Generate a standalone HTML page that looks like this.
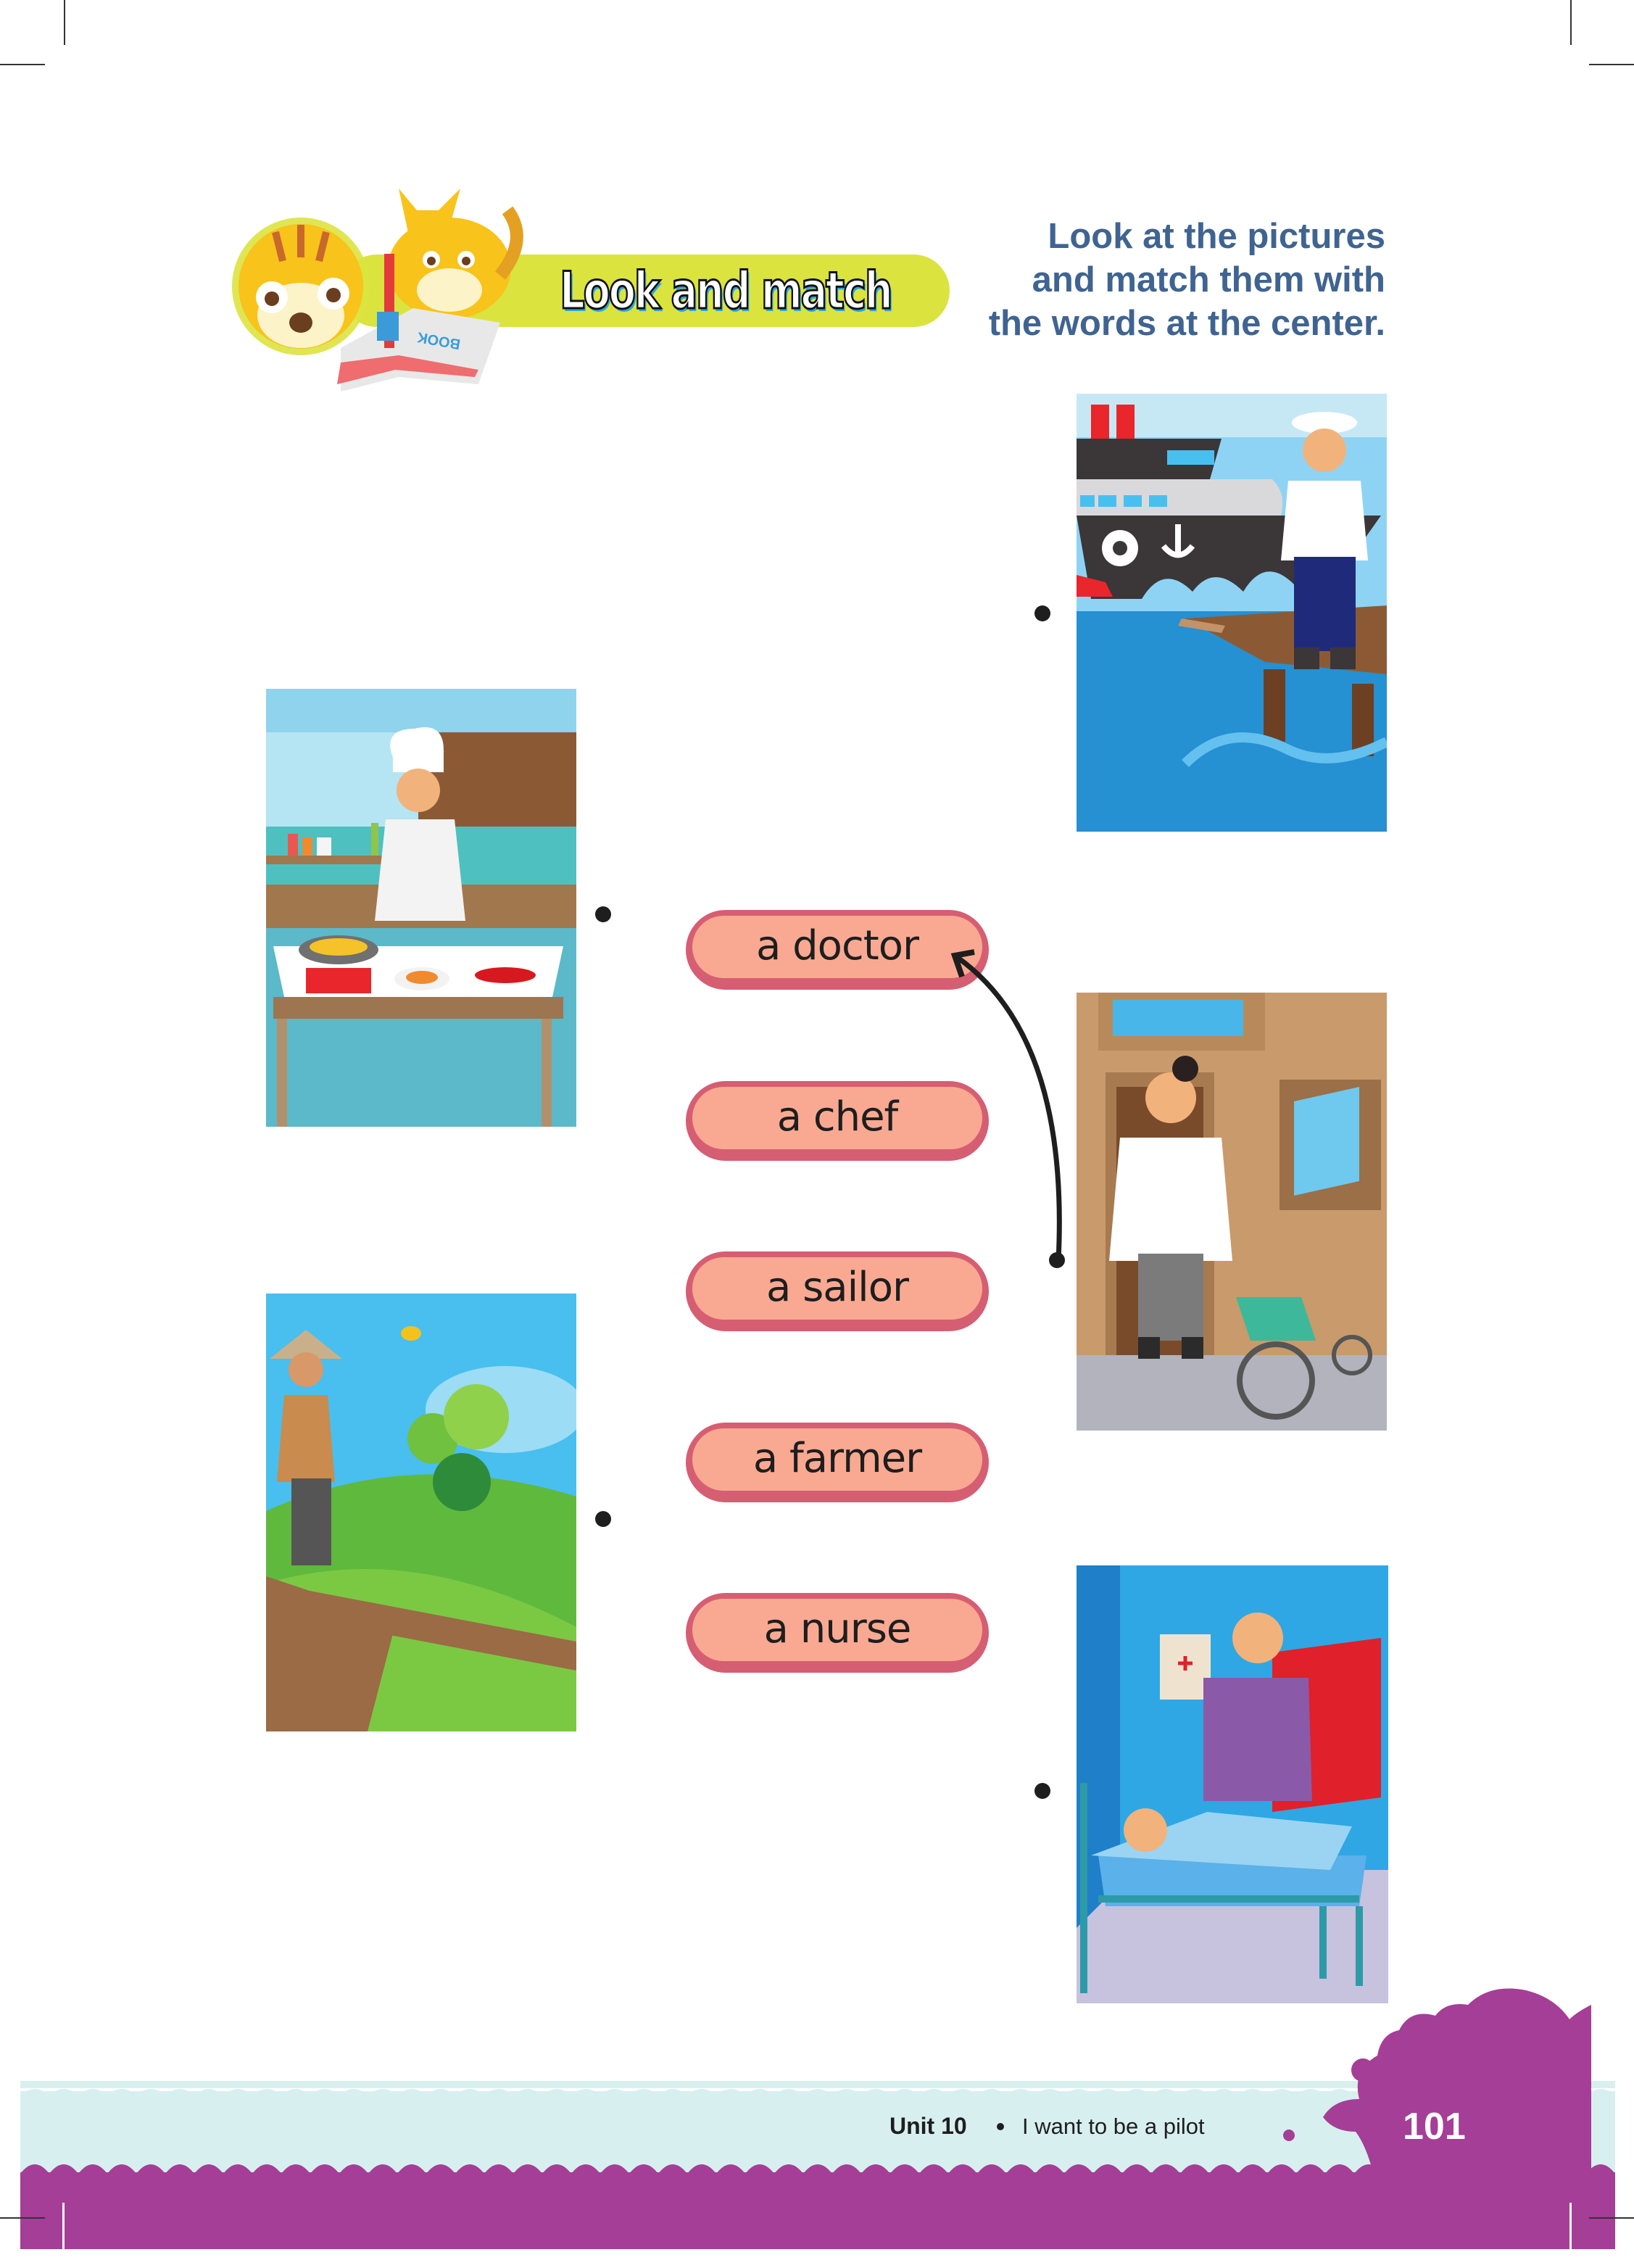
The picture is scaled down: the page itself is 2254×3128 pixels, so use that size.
<!DOCTYPE html>
<html><head><meta charset="utf-8">
<style>
html,body{margin:0;padding:0;background:#fff;}
body{width:2254px;height:3128px;position:relative;overflow:hidden;font-family:"Liberation Sans",sans-serif;}
.abs{position:absolute;}
svg{overflow:visible;}
.img{overflow:hidden !important;}
.pill{position:absolute;left:946px;width:418px;height:110px;box-sizing:border-box;border-radius:55px;background:#d65e72;}
.pill div{position:absolute;left:9px;right:9px;top:8px;bottom:16px;border-radius:48px;background:#f9a992;text-align:center;line-height:84px;font-size:56px;color:#1e1e1e;font-family:"DejaVu Sans","Liberation Sans",sans-serif;letter-spacing:-1px;}
.dot{position:absolute;width:22px;height:22px;border-radius:50%;background:#1e1e1e;margin:-11px 0 0 -11px;}
.instr{position:absolute;right:343px;top:296px;text-align:right;color:#3f6491;font-size:49px;line-height:60px;font-weight:bold;}
.img{position:absolute;width:428px;height:604px;}
</style></head><body>

<!-- crop marks -->
<div class="abs" style="left:88px;top:0;width:2px;height:62px;background:#333"></div>
<div class="abs" style="left:0;top:88px;width:62px;height:2px;background:#333"></div>
<div class="abs" style="left:2166px;top:0;width:2px;height:62px;background:#333"></div>
<div class="abs" style="left:2192px;top:88px;width:62px;height:2px;background:#333"></div>

<!-- header -->
<div class="abs" style="left:470px;top:351px;width:840px;height:100px;border-radius:50px;background:#dbe33f"></div>
<svg class="abs" style="left:320px;top:240px" width="480" height="310" viewBox="0 0 480 310">
 <ellipse cx="95" cy="155" rx="95" ry="95" fill="#dbe33f" opacity=".9"/>
 <circle cx="95" cy="155" r="86" fill="#f8c31a"/>
 <ellipse cx="95" cy="195" rx="60" ry="45" fill="#fdf3c9"/>
 <circle cx="55" cy="170" r="22" fill="#fff"/><circle cx="55" cy="172" r="10" fill="#6b3e1f"/>
 <circle cx="140" cy="165" r="22" fill="#fff"/><circle cx="140" cy="167" r="10" fill="#6b3e1f"/>
 <ellipse cx="95" cy="205" rx="16" ry="14" fill="#6b3e1f"/>
 <path d="M60 80 l10 40 M95 70 l0 45 M130 80 l-10 40" stroke="#c8692a" stroke-width="10"/>
 <path d="M230 20 l15 70 l50 0 l20 -70 l-30 30 l-30 0z" fill="#f8c31a"/>
 <ellipse cx="300" cy="130" rx="85" ry="70" fill="#f8c31a"/>
 <ellipse cx="300" cy="160" rx="45" ry="30" fill="#fdf3c9"/>
 <circle cx="275" cy="118" r="12" fill="#fff"/><circle cx="323" cy="118" r="12" fill="#fff"/>
 <circle cx="275" cy="120" r="6" fill="#6b3e1f"/><circle cx="323" cy="120" r="6" fill="#6b3e1f"/>
 <path d="M380 50 q30 40 -10 90" stroke="#e3a022" stroke-width="18" fill="none"/>
 <path d="M150 240 l100 -55 l120 20 l-30 85 l-110 -10 l-80 20z" fill="#e8e8e8"/>
 <path d="M150 260 l80 -10 l110 20 l-5 10 l-110 -10 l-80 20z" fill="#ef6c6f"/>
 <rect x="210" y="110" width="14" height="130" fill="#e33b3b"/>
 <rect x="200" y="190" width="30" height="40" fill="#3a9bd8"/>
 <text x="285" y="238" font-family="Liberation Sans" font-size="20" font-weight="bold" fill="#3a9bd8" transform="rotate(190 300 232)">BOOK</text>
</svg>
<div class="abs" style="left:772px;top:360px;font-size:70px;font-weight:bold;color:#fff;letter-spacing:-3px;-webkit-text-stroke:3px #111;text-shadow:3px 4px 0 #2aa7e0;font-family:'DejaVu Sans','Liberation Sans',sans-serif;transform:scaleX(0.78);transform-origin:0 0;white-space:nowrap;">Look and match</div>

<div class="instr">Look at the pictures<br>and match them with<br>the words at the center.</div>

<!-- sailor -->
<svg class="img" style="left:1485px;top:543px" viewBox="0 0 428 604">
 <rect width="428" height="604" fill="#2590d2"/>
 <rect width="428" height="300" fill="#8fd3f4"/>
 <rect x="0" y="0" width="428" height="60" fill="#c6e8f5"/>
 <rect x="20" y="15" width="25" height="50" fill="#e8262b"/><rect x="55" y="15" width="25" height="50" fill="#e8262b"/>
 <path d="M0 62 h200 l-20 70 H0z" fill="#3b3638"/>
 <rect x="125" y="78" width="65" height="20" fill="#48c0ef"/>
 <path d="M0 118 h270 q20 20 12 50 H0z" fill="#d9d9dc"/>
 <rect x="5" y="140" width="20" height="16" fill="#48c0ef"/><rect x="30" y="140" width="25" height="16" fill="#48c0ef"/><rect x="65" y="140" width="25" height="16" fill="#48c0ef"/><rect x="100" y="140" width="25" height="16" fill="#48c0ef"/>
 <path d="M0 168 h420 l-60 85 q-30 -20 -60 10 q-40 -40 -70 10 q-40 -40 -70 0 q-40 -40 -70 10 l-70 0z" fill="#3b3638"/>
 <path d="M0 250 l40 10 l10 20 l-50 0z" fill="#e8262b"/>
 <circle cx="60" cy="213" r="25" fill="#fff"/><circle cx="60" cy="213" r="10" fill="#3b3638"/>
 <path d="M140 180 v40 M120 210 q20 25 40 0" stroke="#fff" stroke-width="8" fill="none"/>
 <path d="M150 310 l310 -20 v100 l-200 -20z" fill="#8b5a35"/>
 <path d="M145 310 l60 10 l-5 10 l-60 -10z" fill="#c39269"/>
 <rect x="258" y="380" width="30" height="100" fill="#6d4024"/><rect x="380" y="400" width="30" height="100" fill="#6d4024"/>
 <path d="M150 510 q60 -60 140 -20 q60 30 138 -10" stroke="#64c0ee" stroke-width="14" fill="none"/>
 <ellipse cx="342" cy="40" rx="45" ry="15" fill="#fff"/>
 <circle cx="342" cy="78" r="30" fill="#f2b27b"/>
 <path d="M292 120 h100 l10 110 h-120z" fill="#fff"/>
 <rect x="300" y="225" width="85" height="130" fill="#1f2b7a"/>
 <rect x="300" y="350" width="35" height="30" fill="#3b3638"/><rect x="350" y="350" width="35" height="30" fill="#3b3638"/>
</svg>
<div class="dot" style="left:1438px;top:846px"></div>

<!-- chef -->
<svg class="img" style="left:367px;top:950px" viewBox="0 0 428 604">
 <rect width="428" height="604" fill="#8fd3ec"/>
 <rect x="0" y="60" width="428" height="140" fill="#b5e4f2"/>
 <rect x="210" y="60" width="218" height="130" fill="#8b5a35"/>
 <rect x="0" y="190" width="428" height="80" fill="#4fc0c0"/>
 <rect x="0" y="270" width="428" height="60" fill="#a1774e"/>
 <rect x="0" y="330" width="428" height="274" fill="#5bb9c9"/>
 <rect x="0" y="230" width="200" height="12" fill="#a1774e"/>
 <rect x="30" y="200" width="14" height="30" fill="#e9584f"/><rect x="50" y="205" width="14" height="25" fill="#f08a30"/><rect x="70" y="205" width="20" height="25" fill="#f5f5f5"/><rect x="145" y="185" width="10" height="45" fill="#8ec54a"/>
 <path d="M175 95 q-15 -40 30 -40 q40 -10 40 30 v30 h-70z" fill="#fff"/>
 <circle cx="210" cy="140" r="30" fill="#f2b27b"/>
 <path d="M165 180 h95 l15 140 h-125z" fill="#f3f3f3"/>
 <path d="M10 355 h400 l-15 70 h-370z" fill="#fff"/>
 <rect x="10" y="425" width="400" height="30" fill="#9e7551"/>
 <rect x="15" y="455" width="14" height="150" fill="#b2906b"/><rect x="380" y="455" width="14" height="150" fill="#b2906b"/>
 <ellipse cx="100" cy="360" rx="55" ry="20" fill="#707070"/><ellipse cx="100" cy="356" rx="40" ry="12" fill="#f5c22a"/>
 <rect x="55" y="385" width="90" height="35" fill="#e8262b"/>
 <ellipse cx="215" cy="400" rx="38" ry="16" fill="#f2f2f2"/><ellipse cx="215" cy="398" rx="22" ry="9" fill="#f08a30"/>
 <ellipse cx="330" cy="395" rx="42" ry="11" fill="#d7191f"/>
</svg>
<div class="dot" style="left:832px;top:1261px"></div>

<!-- doctor -->
<svg class="img" style="left:1485px;top:1369px" viewBox="0 0 428 604">
 <rect width="428" height="604" fill="#c99a6b"/>
 <rect x="30" y="0" width="230" height="80" fill="#b88a5b"/>
 <rect x="50" y="10" width="180" height="50" fill="#48b6e8"/>
 <rect x="40" y="110" width="150" height="420" fill="#a87a4f"/>
 <rect x="55" y="130" width="120" height="400" fill="#7a4b2a"/>
 <rect x="280" y="120" width="140" height="180" fill="#9b6f47"/>
 <path d="M300 150 l90 -20 v130 l-90 20z" fill="#6fc8ee"/>
 <rect x="0" y="500" width="428" height="104" fill="#b3b3bd"/>
 <circle cx="130" cy="145" r="35" fill="#f2b27b"/><circle cx="150" cy="105" r="18" fill="#2b2020"/>
 <path d="M60 200 h140 l15 170 h-170z" fill="#fff"/>
 <rect x="85" y="360" width="90" height="120" fill="#7b7b7b"/>
 <rect x="85" y="475" width="30" height="30" fill="#2b2b2b"/><rect x="145" y="475" width="30" height="30" fill="#2b2b2b"/>
 <path d="M220 420 h90 l20 60 h-90z" fill="#3db89a"/>
 <circle cx="275" cy="535" r="50" fill="none" stroke="#555" stroke-width="8"/>
 <circle cx="380" cy="500" r="25" fill="none" stroke="#555" stroke-width="6"/>
</svg>
<div class="dot" style="left:1458px;top:1738px"></div>

<!-- farmer -->
<svg class="img" style="left:367px;top:1784px" viewBox="0 0 428 604">
 <rect width="428" height="604" fill="#48bfee"/>
 <ellipse cx="330" cy="160" rx="110" ry="60" fill="#9cdcf4"/>
 <path d="M0 300 q200 -90 428 -20 V604 H0z" fill="#5fb93d"/>
 <path d="M0 400 q200 -60 428 60 V604 H0z" fill="#7bc943"/>
 <path d="M0 390 l180 60 l-40 154 h-140z" fill="#9a6b45"/>
 <path d="M60 410 l368 70 v40 l-368 -70z" fill="#9a6b45"/>
 <circle cx="230" cy="200" r="35" fill="#6fc13f"/><circle cx="290" cy="170" r="45" fill="#8fd14a"/>
 <circle cx="270" cy="260" r="40" fill="#2e8b3a"/>
 <path d="M5 90 l50 -40 l50 40z" fill="#c9b08a"/>
 <circle cx="55" cy="105" r="24" fill="#d89868"/>
 <path d="M25 140 h60 l10 120 h-80z" fill="#c98b4e"/>
 <rect x="35" y="255" width="55" height="120" fill="#555"/>
 <ellipse cx="200" cy="55" rx="14" ry="10" fill="#f4c21c"/>
</svg>
<div class="dot" style="left:832px;top:2095px"></div>

<!-- nurse -->
<svg class="img" style="left:1485px;top:2159px;width:430px" viewBox="0 0 430 604">
 <rect width="430" height="604" fill="#1f7fc8"/>
 <path d="M60 0 H430 V440 H60z" fill="#2fa7e4"/>
 <path d="M270 120 l150 -20 v220 l-150 20z" fill="#e0202a"/>
 <path d="M0 500 L80 420 H430 V604 H0z" fill="#c7c2de"/>
 <rect x="115" y="95" width="70" height="90" fill="#efe3d0"/>
 <path d="M140 135 h20 M150 125 v20" stroke="#e0202a" stroke-width="5"/>
 <circle cx="250" cy="100" r="35" fill="#f2b27b"/>
 <path d="M175 155 h145 l5 170 h-150z" fill="#8a5aa8"/>
 <path d="M30 400 h370 l-10 70 h-350z" fill="#5bb1e9"/>
 <path d="M20 400 l160 -60 l200 20 l-30 60 z" fill="#9ad4f2"/>
 <circle cx="95" cy="365" r="30" fill="#f2b27b"/>
 <path d="M10 300 v290 M30 460 h360 M390 470 v110 M340 470 v100" stroke="#2d9aa8" stroke-width="10" fill="none"/>
</svg>
<div class="dot" style="left:1438px;top:2470px"></div>

<!-- pills -->
<div class="pill" style="top:1255px"><div>a doctor</div></div>
<div class="pill" style="top:1491px"><div>a chef</div></div>
<div class="pill" style="top:1726px"><div>a sailor</div></div>
<div class="pill" style="top:1962px"><div>a farmer</div></div>
<div class="pill" style="top:2197px"><div>a nurse</div></div>

<!-- arrow -->
<svg class="abs" style="left:0;top:0" width="2254" height="3128">
 <path d="M1460 1738 Q1475 1430 1320 1320" stroke="#1e1e1e" stroke-width="7" fill="none"/>
 <path d="M1344 1313 L1317 1318 L1327 1347" stroke="#1e1e1e" stroke-width="8" fill="none"/>
</svg>

<!-- footer -->
<svg class="abs" style="left:0;top:2760px" width="2254" height="368">
 <defs>
  <pattern id="wv" x="28" width="40" height="24" patternUnits="userSpaceOnUse"><path d="M0 0 H40 V10 Q20 -8 0 10z" fill="#fff"/></pattern>
  <pattern id="wv2" x="28" width="40" height="24" patternUnits="userSpaceOnUse"><path d="M0 0 H40 V22 Q20 -4 0 22z" fill="#d8eff0"/></pattern>
 </defs>
 <rect x="28" y="110" width="2200" height="124" fill="#d8eff0"/>
 <rect x="28" y="110" width="2200" height="14" fill="url(#wv)"/>
 <rect x="28" y="222" width="2200" height="120" fill="#a53e96"/>
 <rect x="28" y="214" width="2200" height="22" fill="url(#wv2)"/>
 <path d="M1895 240 q-10 -40 -25 -60 q-30 0 -45 -20 q15 -25 50 -25 q-10 -40 25 -60 q5 -30 30 -35 q15 -30 50 -20 q15 -20 45 -15 q30 -30 80 -20 q40 10 60 40 q10 -10 30 -20 V240z" fill="#a53e96"/>
 <circle cx="1880" cy="95" r="16" fill="#a53e96"/><circle cx="1975" cy="55" r="11" fill="#a53e96"/>
 <circle cx="1778" cy="185" r="8" fill="#a53e96"/>
 <text x="1227" y="183" font-family="Liberation Sans" font-size="32" font-weight="bold" fill="#1e1e1e">Unit 10</text>
 <circle cx="1380" cy="173" r="5" fill="#1e1e1e"/>
 <text x="1410" y="183" font-family="Liberation Sans" font-size="31" fill="#1e1e1e">I want to be a pilot</text>
 <text x="1935" y="190" font-family="Liberation Sans" font-size="52" font-weight="bold" fill="#fff">101</text>
 <rect x="86" y="278" width="3" height="90" fill="#fff"/>
 <rect x="2165" y="278" width="3" height="90" fill="#fff"/>
 <rect x="0" y="298" width="62" height="2" fill="#333"/>
 <rect x="2192" y="298" width="62" height="2" fill="#333"/>
</svg>
</body></html>
